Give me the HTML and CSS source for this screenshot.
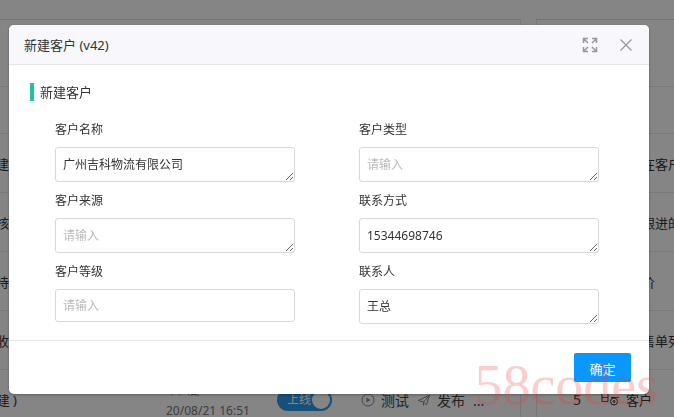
FILE: index.html
```html
<!DOCTYPE html>
<html lang="zh-CN">
<head>
    <meta charset="UTF-8">
    <meta name="viewport" content="width=device-width, initial-scale=1.0">
    <title>新建客户</title>
    <link rel="stylesheet" href="styles.css">
</head>
<body>
    <div class="page">
        <div class="panel list">
            <div class="panel-top"></div>
            <div class="row row-head"></div>
            <div class="row"><span class="name">建</span></div>
            <div class="row"><span class="name">核</span></div>
            <div class="row"><span class="name">待</span></div>
            <div class="row"><span class="name">收</span></div>
            <div class="row">
                <span class="name name-long">建 )</span>
                <span class="author">个人部<br>20/08/21 16:51</span>
                <label class="switch">
                    <input type="checkbox" checked>
                    <span>上线</span>
                </label>
                <div class="actions">
                    <a href="#">
                        <svg width="14" height="14" viewBox="0 0 14 14" fill="none" stroke="currentColor"><circle cx="7" cy="7" r="6"/><path d="M5.500 4.500v5L9.500 7z" fill="currentColor" stroke="none"/></svg>
                        测试
                    </a>
                    <a href="#">
                        <svg width="14" height="14" viewBox="0 0 14 14" fill="none" stroke="currentColor"><path d="M1.500 7.500L12.500 2 9.500 12 6.500 9zM6.500 9l6-7M6.500 9v3.500"/></svg>
                        发布
                    </a>
                    <a href="#">...</a>
                </div>
            </div>
        </div>
        <div class="panel side">
            <div class="panel-top"></div>
            <div class="row row-head"></div>
            <div class="row"><span class="desc">在客户</span></div>
            <div class="row"><span class="desc">跟进的</span></div>
            <div class="row"><span class="desc">价</span></div>
            <div class="row"><span class="desc">售单列</span></div>
            <div class="row">
                <span class="index">5</span>
                <svg class="type-icon" width="19" height="14" viewBox="0 0 19 14" fill="none" stroke="currentColor"><path d="M1 1.500h6v4H1zM1 5.500v4h6v-4M10 1.500h8M10 5.500h8"/><circle cx="13" cy="9.500" r="3.500"/><circle cx="13" cy="9.500" r="1"/></svg>
                <span>客户</span>
            </div>
        </div>
    </div>

    <div class="mask">
        <form class="modal" role="dialog" aria-labelledby="modal-title">
            <div class="modal-header">
                <span id="modal-title">新建客户 (v42)</span>
                <button type="button" class="icon-btn" aria-label="全屏">
                    <svg width="16" height="16" viewBox="0 0 16 16" fill="none" stroke="currentColor" stroke-width="1.500"><path d="M1.500 6V1.500H6M1.500 1.500l4.500 4.500M10 1.500h4.500V6M14.500 1.500L10 6M1.500 10v4.500H6M1.500 14.500L6 10M10 14.500h4.500V10M14.500 14.500L10 10"/></svg>
                </button>
                <button type="button" class="icon-btn" aria-label="关闭">
                    <svg width="14" height="14" viewBox="0 0 14 14" fill="none" stroke="currentColor" stroke-width="1.200"><path d="M1.500 1.500l11 11M12.500 1.500l-11 11"/></svg>
                </button>
            </div>
            <div class="modal-body">
                <h2>新建客户</h2>
                <div class="fields">
                    <div class="field">
                        <label for="name">客户名称</label>
                        <textarea id="name" rows="1" placeholder="请输入">广州吉科物流有限公司</textarea>
                    </div>
                    <div class="field">
                        <label for="type">客户类型</label>
                        <textarea id="type" rows="1" placeholder="请输入"></textarea>
                    </div>
                    <div class="field">
                        <label for="source">客户来源</label>
                        <textarea id="source" rows="1" placeholder="请输入"></textarea>
                    </div>
                    <div class="field">
                        <label for="phone">联系方式</label>
                        <textarea id="phone" rows="1" placeholder="请输入">15344698746</textarea>
                    </div>
                    <div class="field">
                        <label for="level">客户等级</label>
                        <input id="level" type="text" placeholder="请输入">
                    </div>
                    <div class="field">
                        <label for="contact">联系人</label>
                        <textarea id="contact" rows="1" placeholder="请输入">王总</textarea>
                    </div>
                </div>
            </div>
            <div class="modal-footer">
                <button type="submit" class="primary-btn">确定</button>
            </div>
        </form>
    </div>
    <div class="watermark">58codes</div>
</body>
</html>
```
FILE: styles.css
```css
* {
    box-sizing: border-box;
}

body {
    margin: 0;
    height: 100vh;
    overflow: hidden;
    background: #fff;
    font-family: "Noto Sans", "Noto Sans CJK SC", sans-serif;
    font-size: 13px;
    color: #333;
}

/* page behind the dialog */
.page {
    display: flex;
    gap: 15px;
    padding-top: 19px;
    background: #fff;
}

.panel {
    border-top: 1px solid #dcdce4;
}

.list {
    flex: 1;
    border-right: 1px solid #e4e4ea;
}

.side {
    width: 138px;
    border-left: 1px solid #e4e4ea;
}

.panel-top {
    height: 67px;
    border-bottom: 1px solid #e8e8ec;
}

.row {
    display: flex;
    align-items: center;
    height: 59px;
    border-bottom: 1px solid #e8e8ec;
    white-space: nowrap;
}

.row-head {
    height: 47px;
}

.name {
    display: flex;
    justify-content: flex-end;
    width: 9px;
}

.name-long {
    width: 17px;
}

.author {
    margin-left: 149px;
    padding-top: 4px;
    width: 111px;
    font-size: 12px;
    line-height: 20px;
    color: #777;
}

.switch {
    position: relative;
    width: 55px;
    height: 22px;
    margin-top: 2px;
    border-radius: 11px;
    background: #2d9ae8;
    color: #fff;
    font-size: 12px;
    line-height: 22px;
    padding-left: 10px;
}

.switch input {
    position: absolute;
    top: 2px;
    right: 2px;
    width: 18px;
    height: 18px;
    margin: 0;
    appearance: none;
    border-radius: 50%;
    background: #fff;
}

.actions {
    display: flex;
    gap: 8px;
    margin-left: 29px;
    padding-top: 2px;
    font-size: 14px;
}

.actions a {
    display: flex;
    align-items: center;
    gap: 6px;
    color: #444;
    text-decoration: none;
}

.actions svg {
    color: #888;
}

.desc {
    margin-left: 105px;
}

.index {
    margin-left: 36px;
    width: 28px;
    font-size: 14px;
}

.type-icon {
    margin-right: 6px;
}

/* dialog */
.mask {
    position: fixed;
    inset: 0;
    padding: 25px 25px 0 9px;
    background: rgba(0, 0, 0, 0.48);
}

.modal {
    background: #fff;
    border-radius: 5px;
    overflow: hidden;
    box-shadow: 0 1px 3px rgba(0, 0, 0, 0.3);
}

.modal-header {
    display: flex;
    align-items: center;
    gap: 14px;
    height: 40px;
    padding: 0 12px 0 15px;
    background: #f7f7fc;
    border-bottom: 1px solid #e6e6ea;
}

#modal-title {
    flex: 1;
}

.icon-btn {
    display: flex;
    align-items: center;
    justify-content: center;
    width: 22px;
    height: 22px;
    padding: 0;
    border: none;
    background: none;
    color: #999;
    cursor: pointer;
}

.modal-body {
    padding: 18px 50px 16px 46px;
}

.modal-body h2 {
    margin: 0 0 10px -25px;
    padding-left: 6px;
    border-left: 4px solid #1dc2a0;
    font-size: 13px;
    font-weight: normal;
    line-height: 18px;
}

.fields {
    display: grid;
    grid-template-columns: 1fr 1fr;
    column-gap: 64px;
}

.field label {
    display: block;
    padding-top: 2px;
    font-size: 12px;
    line-height: 34px;
}

.field input,
.field textarea {
    display: block;
    width: 100%;
    height: 33px;
    padding: 7px;
    border: 1px solid #d9d9d9;
    border-radius: 3px;
    background: #fff;
    font-family: inherit;
    font-size: 12px;
    line-height: 18px;
    color: #333;
    outline: none;
}

.field textarea {
    height: 35px;
    padding: 8px 7px 7px;
    overflow: hidden;
    resize: vertical;
}

.field ::placeholder {
    color: #bbb;
}

.modal-footer {
    display: flex;
    justify-content: flex-end;
    padding: 12px 18px;
    border-top: 1px solid #e8e8e8;
}

.primary-btn {
    width: 57px;
    height: 29px;
    padding: 2px 0 0;
    border: none;
    border-radius: 2px;
    background: #0a98ff;
    color: #fff;
    font-family: inherit;
    font-size: 13px;
    cursor: pointer;
}

.watermark {
    position: fixed;
    right: 16px;
    bottom: 4px;
    font-family: "Liberation Serif", serif;
    font-size: 56px;
    line-height: 56px;
    color: rgba(240, 60, 60, 0.25);
    pointer-events: none;
}
```
